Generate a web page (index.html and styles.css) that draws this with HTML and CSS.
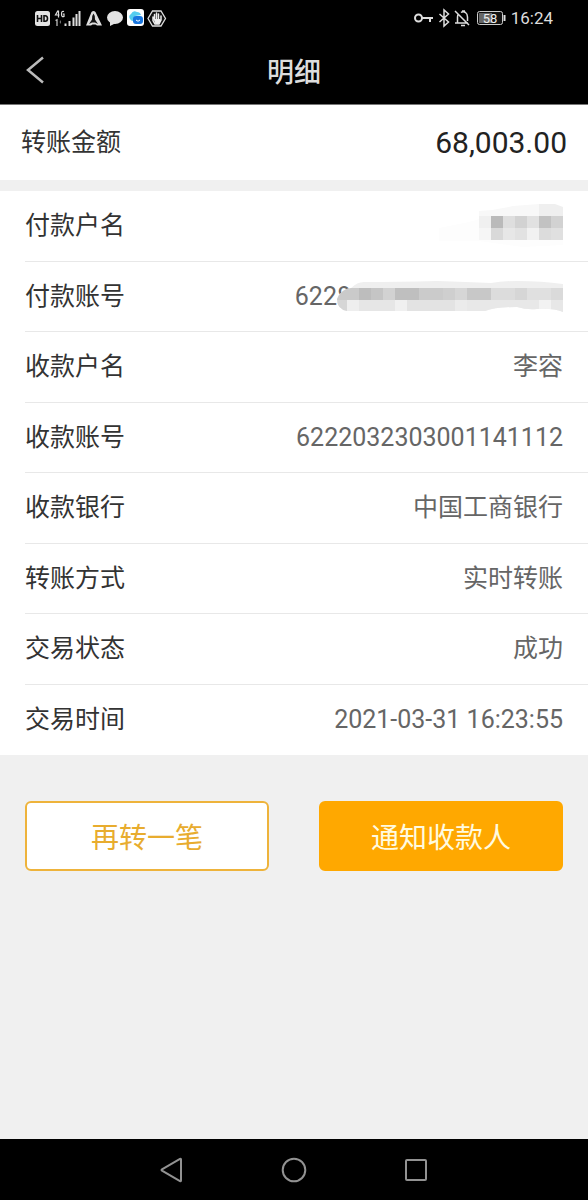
FILE: index.html
```html
<!DOCTYPE html>
<html lang="zh-CN">
<head>
<meta charset="utf-8">
<meta name="viewport" content="width=device-width, initial-scale=1">
<title>明细</title>
<link rel="stylesheet" href="styles.css">
</head>
<body>
<div class="screen">
  <div class="status">
    <svg class="status-icons" width="132" height="20" viewBox="0 0 132 20" aria-hidden="true">
      <rect x="0" y="3" width="15" height="15" rx="2.5" fill="#e4e4e4"/>
      <path d="M2.500 7v7M6.500 7v7M2.500 10.500h4M9 7.800v5.400h1.200q2.300 0 2.300-2.700t-2.300-2.700z" fill="none" stroke="#111" stroke-width="1.600"/>
      <path d="M23 2.500l-2.500 4.500h4M23.500 2.500v7M29 3.500q-2.500-1-2.500 2.500t2.500 2.500v-2.500h-1.200" fill="none" stroke="#ddd" stroke-width="1.200"/>
      <path d="M20.500 12.500l1.500-.8v6.300" fill="none" stroke="#ccc" stroke-width="1.200"/><path d="M26 12v4l-1.500-2z" fill="#777"/>
      <path d="M30.500 15.500v2.500M34.500 13v5M38.500 9.500v8.500M41.500 6v12M44.500 3v15" stroke="#ddd" stroke-width="2"/>
      <path d="M51 17.500L56.500 4q2-2 4 0L67 17.500h-5l-1.500-1h-3L56 17.500z" fill="#ddd"/>
      <path d="M58.500 5.500q2 2.500 1.500 6l3 4.500-3-1.500h-3L54 16l3-4.500q-.5-3.500 1.500-6z" fill="#111"/>
      <ellipse cx="80" cy="9.500" rx="8" ry="6.500" fill="#e2e2e2"/><path d="M75 13v5l6-3z" fill="#e2e2e2"/>
      <rect x="92" y="1" width="17" height="17" rx="3" fill="#fff"/>
      <path d="M95 11q-2-3 1-5 2-4 6-2 3 0 4 3l-6 1-2 5q-2 0-3-2z" fill="#55cdef"/>
      <rect x="98" y="8" width="10" height="8" rx="3" fill="#1976df"/>
      <path d="M101 12q2 2.500 4 0" fill="none" stroke="#fff" stroke-width="1"/>
      <path d="M117.500 3h8.500l4.500 7.500L126 18h-8.500L113 10.500z" fill="#111" stroke="#ddd" stroke-width="1.300"/>
      <path d="M118 9v3.500l2 3.500h4l2-4V8M119.500 11V6.500M121.500 11V5M123.500 11V6" fill="none" stroke="#eee" stroke-width="1.500" stroke-linecap="round"/>
      <path d="M118.500 11h7v2.500l-2 2.500h-3z" fill="#eee"/>
    </svg>
    <div class="status-right">
      <svg width="56" height="20" viewBox="0 0 56 20" fill="none" stroke="#ddd" aria-hidden="true">
        <circle cx="4.500" cy="10" r="3.500" stroke-width="2"/><path d="M8 10h11M16 10v4" stroke-width="2"/>
        <path d="M25.500 6l9 8-4.500 4V2l4.500 4-9 8" stroke-width="1.500"/>
        <path d="M41 15h13M43.500 15V9q0-2 1-3M47 4.500q2-1.500 4.500 0 2 1.500 2 4.500v4M48 3h3M47 17.500h4M41 3l14 14" stroke-width="1.500"/>
      </svg>
      <svg width="29" height="14" viewBox="0 0 29 14" role="img" aria-label="58%">
        <rect x=".5" y=".5" width="25" height="13" rx="2" fill="#111" stroke="#ccc"/>
        <rect x="2" y="2" width="13" height="10" fill="#666"/>
        <path d="M27.500 4v6" stroke="#ddd" stroke-width="2"/>
        <text class="battery-text" x="13" y="12">58</text>
      </svg>
      <span>16:24</span>
    </div>
  </div>
  <header class="header">
    <button class="back" type="button" aria-label="返回">
      <svg width="18" height="28" viewBox="0 0 18 28" aria-hidden="true"><path d="M17 1.500L2 14l15 12.500" fill="none" stroke="#bbb" stroke-width="2.500"/></svg>
    </button>
    <h1 class="title">明细</h1>
  </header>
  <main class="main">
    <section class="amount"><span>转账金额</span><span class="amount-value">68,003.00</span></section>
    <dl class="list">
      <div class="row"><dt>付款户名</dt><dd>
        <svg width="124" height="46" viewBox="0 0 124 46" role="img" aria-label="已隐藏">
          <path d="M0 25l30-6 44-13 50 0v36l-40 2-44-6H0z" fill="#fdfdfd"/>
          <path d="M40 8q18-1 34-5l26-2v12H40z" fill="#f8f8f8"/><path d="M100 1h16l8 3v9h-24z" fill="#efefef"/>
          <g stroke-width="12" fill="none">
            <path d="M40 19h12" stroke="#f0f0f0"/><path d="M52 19h12" stroke="#bababa"/><path d="M64 19h12" stroke="#dedede"/><path d="M76 19h12" stroke="#d2d2d2"/><path d="M88 19h12" stroke="#e1e1e1"/><path d="M100 19h12" stroke="#c2c2c2"/><path d="M112 19h12" stroke="#d2d2d2"/>
            <path d="M40 31h12" stroke="#f6f6f6"/><path d="M52 31h12" stroke="#d9d9d9"/><path d="M64 31h12" stroke="#e7e7e7"/><path d="M76 31h12" stroke="#e2e2e2"/><path d="M88 31h12" stroke="#f1f1f1"/><path d="M100 31h12" stroke="#dcdcdc"/><path d="M112 31h12" stroke="#e0e0e0"/>
          </g>
        </svg></dd></div>
      <div class="row"><dt>付款账号</dt><dd><span>6228</span>
        <svg class="account-mask" width="226" height="36" viewBox="0 0 226 36" role="img" aria-label="已隐藏">
          <defs><clipPath id="brush"><path d="M0 20Q4 10 14 9Q20 3 27 3Q60 3 100 2Q130 3 154 4Q165 2 180 2Q205 2 226 5V33Q216 29 200 30Q190 31 180 28Q158 28 148 32H10Q0 30 0 20z"/></clipPath></defs>
          <g clip-path="url(#brush)">
            <rect width="226" height="36" fill="#efefef"/>
            <g stroke-width="12" fill="none">
              <path d="M0 15h22" stroke="#cacaca"/><path d="M22 15h12" stroke="#bdbdbd"/><path d="M34 15h12" stroke="#c5c5c5"/><path d="M46 15h12" stroke="#d2d2d2"/><path d="M58 15h24" stroke="#bfbfbf"/><path d="M82 15h24" stroke="#cbcbcb"/><path d="M106 15h12" stroke="#cfcfcf"/><path d="M118 15h12" stroke="#d6d6d6"/><path d="M130 15h24" stroke="#c8c8c8"/><path d="M154 15h24" stroke="#dcdcdc"/><path d="M178 15h12" stroke="#d6d6d6"/><path d="M190 15h24" stroke="#e0e0e0"/><path d="M214 15h12" stroke="#dadada"/>
              <path d="M0 27h10" stroke="#d6d6d6"/><path d="M10 27h12" stroke="#eee"/><path d="M22 27h36" stroke="#e6e6e6"/><path d="M58 27h12" stroke="#f0f0f0"/><path d="M70 27h48" stroke="#e3e3e3"/><path d="M118 27h12" stroke="#ebebeb"/><path d="M130 27h72" stroke="#e8e8e8"/><path d="M202 27h12" stroke="#f2f2f2"/><path d="M214 27h12" stroke="#e7e7e7"/>
            </g>
          </g>
        </svg></dd></div>
      <div class="row"><dt>收款户名</dt><dd>李容</dd></div>
      <div class="row"><dt>收款账号</dt><dd>6222032303001141112</dd></div>
      <div class="row"><dt>收款银行</dt><dd>中国工商银行</dd></div>
      <div class="row"><dt>转账方式</dt><dd>实时转账</dd></div>
      <div class="row"><dt>交易状态</dt><dd>成功</dd></div>
      <div class="row"><dt>交易时间</dt><dd>2021-03-31 16:23:55</dd></div>
    </dl>
    <div class="actions">
      <button class="btn" type="button">再转一笔</button>
      <button class="btn btn-primary" type="button">通知收款人</button>
    </div>
  </main>
  <nav class="nav" aria-label="系统导航">
    <button type="button" aria-label="后退"><svg width="26" height="26" viewBox="0 0 26 26"><path d="M22 2.500v21q0 1-1 .5L3 13.700q-1-.7 0-1.400L21 2q1-.5 1 .5z"/></svg></button>
    <button type="button" aria-label="主页"><svg width="26" height="26" viewBox="0 0 26 26"><circle cx="13" cy="13" r="11.300"/></svg></button>
    <button type="button" aria-label="最近任务"><svg width="26" height="26" viewBox="0 0 26 26"><rect x="3" y="3" width="20" height="20" rx="1"/></svg></button>
  </nav>
</div>
</body>
</html>
```
FILE: styles.css
```css
* { box-sizing: border-box; }
body {
  margin: 0;
  background: #f0f0f0;
  color: #333;
  font-family: Roboto, "Noto Sans CJK SC", sans-serif;
  font-size: 25px;
  line-height: 36px;
}
button { font: inherit; cursor: pointer; }
svg { display: block; flex: none; }
.screen { display: flex; flex-direction: column; min-height: 100vh; }
.status {
  display: flex;
  align-items: center;
  justify-content: space-between;
  height: 36px;
  padding: 0 35px;
  background: #000;
  color: #ddd;
  font-size: 17px;
  line-height: 20px;
}
.status-right { display: flex; align-items: center; gap: 7px; }
.status-right span { margin-left: -2px; }
.battery-text { fill: #eee; font-size: 13px; text-anchor: middle; }
.header {
  display: grid;
  grid-template-columns: 1fr auto 1fr;
  align-items: center;
  height: 69px;
  background: #000;
  border-bottom: 1px solid #777;
  color: #ddd;
}
.back { justify-self: start; padding: 0 26px; border: 0; background: none; }
.title { margin: 0; padding-top: 6px; font-size: 27px; font-weight: 500; line-height: 36px; }
.main { flex: 1; }
.amount {
  display: flex;
  align-items: center;
  justify-content: space-between;
  height: 75px;
  padding: 0 21px;
  background: #fff;
}
.amount-value { color: #222; font-size: 30px; }
.list { margin: 11px 0 0; padding-left: 25px; background: #fff; }
.row {
  display: flex;
  align-items: center;
  justify-content: space-between;
  height: 71px;
  padding-right: 25px;
  border-bottom: 1px solid #e8e8e8;
}
.row:nth-child(even) { height: 70px; }
.row:last-child { border-bottom: 0; }
.row dd { display: flex; align-items: center; margin: 0; color: #666; }
.account-mask { margin-left: -14px; }
.actions {
  display: grid;
  grid-template-columns: 1fr 1fr;
  gap: 50px;
  padding: 46px 25px;
}
.btn {
  height: 70px;
  padding: 6px 0 0;
  border: 2px solid #eeb33b;
  border-radius: 6px;
  background: #fff;
  color: #e8ac2e;
  font-size: 28px;
}
.btn-primary { border-color: #ffa800; background: #ffa800; color: #fffbe0; }
.nav {
  display: flex;
  align-items: center;
  justify-content: center;
  gap: 96px;
  height: 61px;
  background: #000;
}
.nav button { padding: 0; border: 0; background: none; }
.nav svg { fill: none; stroke: #929292; stroke-width: 2; }
```
